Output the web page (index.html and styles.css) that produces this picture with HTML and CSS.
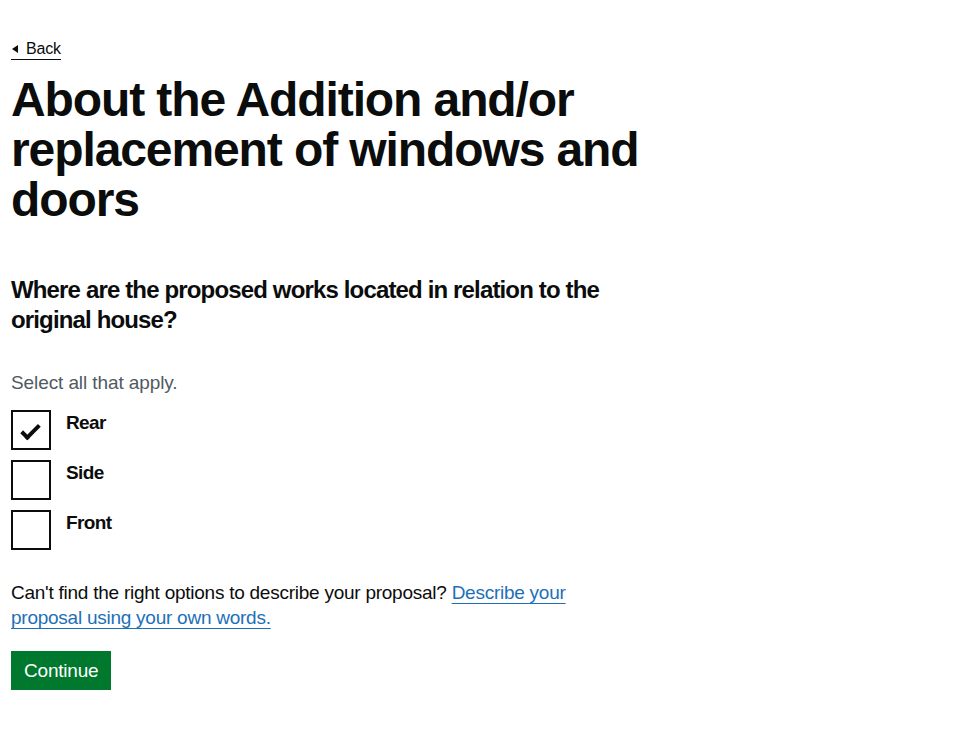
FILE: index.html
```html
<!DOCTYPE html>
<html lang="en">
<head>
<meta charset="utf-8">
<title>About the Addition and/or replacement of windows and doors</title>
<link rel="stylesheet" href="styles.css">
</head>
<body>
<div class="page">
  <a class="back-link" href="#"><span class="back-arrow"></span>Back</a>
  <main class="main">
    <h1 class="heading-xl">About the Addition and/or replacement of windows and doors</h1>
    <form class="form">
      <fieldset class="fieldset">
        <legend class="legend">Where are the proposed works located in relation to the original house?</legend>
        <div class="hint">Select all that apply.</div>
        <div class="checkboxes">
          <label class="checkbox">
            <span class="box checked"></span>
            <span class="label">Rear</span>
          </label>
          <label class="checkbox">
            <span class="box"></span>
            <span class="label">Side</span>
          </label>
          <label class="checkbox">
            <span class="box"></span>
            <span class="label">Front</span>
          </label>
        </div>
      </fieldset>
      <p class="body">Can't find the right options to describe your proposal? <a class="link" href="#">Describe your proposal using your own words.</a></p>
      <button class="button" type="button">Continue</button>
    </form>
  </main>
</div>
</body>
</html>
```
FILE: styles.css
```css
* { box-sizing: border-box; }
html, body { margin: 0; padding: 0; background: #ffffff; }
body {
  font-family: "Liberation Sans", Arial, sans-serif;
  color: #0b0c0c;
  -webkit-font-smoothing: antialiased;
}
.page {
  padding: 39px 11px 0 11px;
  width: 662px;
}
.back-link {
  display: inline-flex;
  align-items: center;
  font-size: 16px;
  line-height: 20px;
  color: #0b0c0c;
  text-decoration: none;
  border-bottom: 1px solid #0b0c0c;
  padding-left: 1px;
  letter-spacing: -0.2px;
}
.back-arrow {
  display: inline-block;
  width: 0;
  height: 0;
  border-top: 4px solid transparent;
  border-bottom: 4px solid transparent;
  border-right: 6px solid #0b0c0c;
  margin-right: 8px;
}
.main { padding-top: 15px; }
.heading-xl {
  font-size: 48px;
  line-height: 50px;
  font-weight: 700;
  letter-spacing: -1.1px;
  margin: 0 0 50px 0;
}
.form { margin: 0; }
.fieldset { border: 0; margin: 0 0 30px 0; padding: 0; min-width: 0; }
.legend {
  font-size: 24px;
  line-height: 30px;
  font-weight: 700;
  letter-spacing: -0.85px;
  padding: 0;
  margin: 0 0 35px 0;
  max-width: 630px;
}
.hint {
  font-size: 19px;
  line-height: 25px;
  color: #505a5f;
  margin-bottom: 15px;
  letter-spacing: -0.1px;
}
.checkboxes { display: flex; flex-direction: column; gap: 10px; }
.checkbox { display: flex; align-items: flex-start; cursor: pointer; }
.box {
  width: 40px;
  height: 40px;
  border: 2px solid #0b0c0c;
  flex: none;
  display: flex;
  align-items: center;
  justify-content: center;
}
.box.checked::after {
  content: "";
  width: 15px;
  height: 6px;
  border: solid #0b0c0c;
  border-width: 0 0 4px 4px;
  transform: translate(-1px, 0) rotate(-45deg);
  box-sizing: content-box;
}
.label {
  font-size: 19px;
  line-height: 25px;
  font-weight: 700;
  letter-spacing: -0.6px;
  padding: 0 15px;
}
.body {
  font-size: 19px;
  line-height: 25px;
  letter-spacing: -0.25px;
  margin: 0 0 21px 0;
  max-width: 600px;
}
.link {
  color: #1d70b8;
  text-decoration: underline;
  text-decoration-thickness: 1px;
  text-underline-offset: 4px;
}
.button {
  font-family: inherit;
  font-size: 19px;
  line-height: 19px;
  color: #ffffff;
  background: #00782d;
  border: 2px solid transparent;
  border-radius: 0;
  padding: 8px 11px 8px;
  box-shadow: 0 2px 0 #002d18;
  margin: 0;
  cursor: pointer;
  letter-spacing: -0.2px;
}
```
